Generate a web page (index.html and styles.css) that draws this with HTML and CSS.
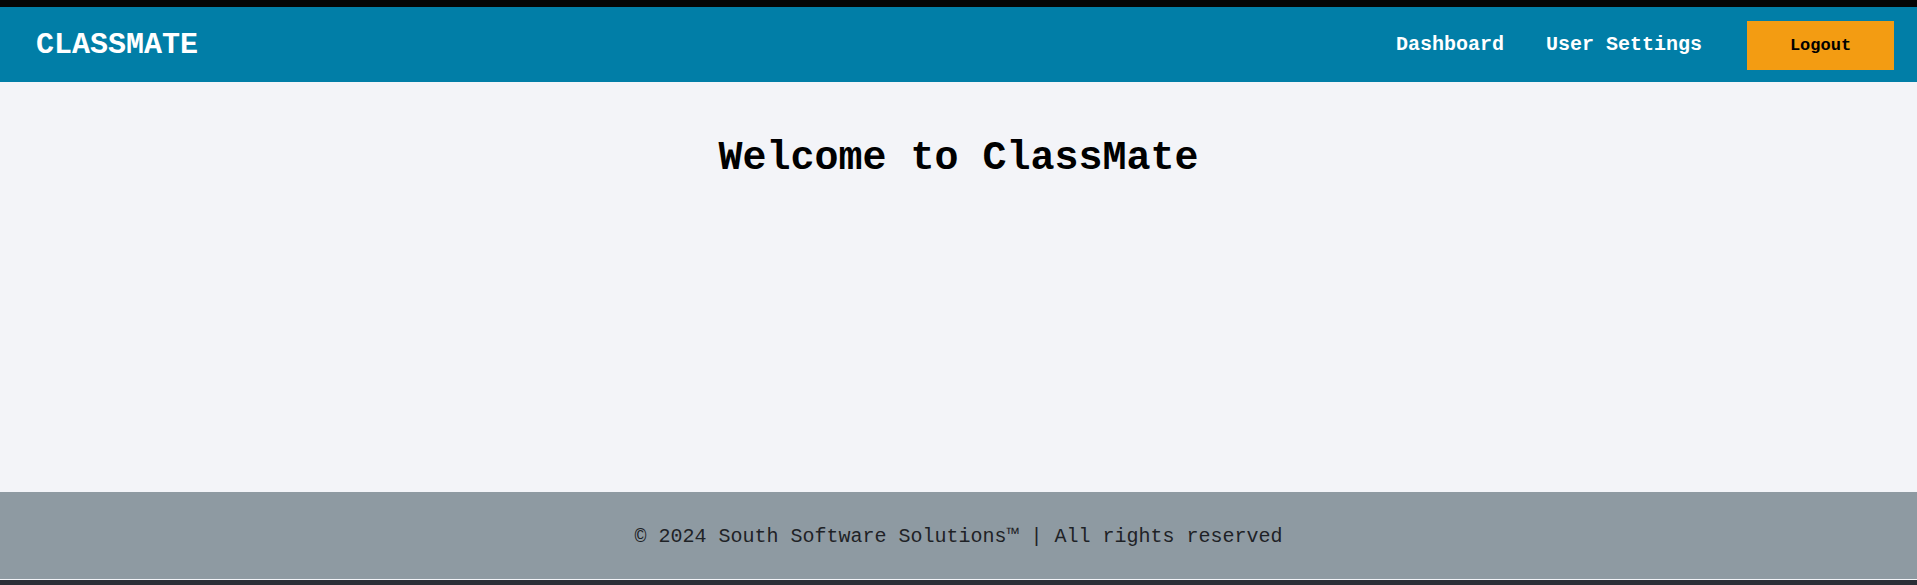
FILE: index.html
```html
<!DOCTYPE html>
<html lang="en">
<head>
<meta charset="utf-8">
<title>ClassMate</title>
<link rel="stylesheet" href="styles.css">
</head>
<body>
<div class="topstrip"></div>
<header class="header">
  <div class="logo">CLASSMATE</div>
  <nav class="nav">
    <a class="nav-link" href="#">Dashboard</a>
    <a class="nav-link" href="#">User Settings</a>
    <button class="logout" type="button">Logout</button>
  </nav>
</header>
<main class="main">
  <h1 class="title">Welcome to ClassMate</h1>
</main>
<footer class="footer">
  <p class="footer-text">© 2024 South Software Solutions™ | All rights reserved</p>
</footer>
<div class="bottomstrip"></div>
</body>
</html>
```
FILE: styles.css
```css
html, body {
  margin: 0;
  padding: 0;
}
body {
  min-height: 100vh;
  display: flex;
  flex-direction: column;
  background: #f3f4f8;
  font-family: "Liberation Mono", "Courier New", monospace;
}
.topstrip {
  height: 7px;
  background: #050505;
}
.header {
  height: 75px;
  background: #017ea7;
  display: flex;
  align-items: center;
  justify-content: space-between;
  padding: 0 23px 0 36px;
}
.logo {
  color: #ffffff;
  font-weight: bold;
  font-size: 30px;
}
.nav {
  display: flex;
  align-items: center;
}
.nav-link {
  color: #ffffff;
  font-weight: bold;
  font-size: 20px;
  text-decoration: none;
  margin-right: 42px;
}
.nav-link + .nav-link {
  margin-right: 45px;
}
.logout {
  width: 147px;
  height: 49px;
  margin-top: 2px;
  background: #f39c12;
  border: none;
  color: #000000;
  font-family: "Liberation Mono", "Courier New", monospace;
  font-weight: bold;
  font-size: 17px;
  padding: 0;
}
.main {
  flex: 1;
  padding: 25px 0 0;
}
.title {
  margin: 29px 0 0;
  text-align: center;
  font-size: 40px;
  font-weight: bold;
  color: #000000;
}
.footer {
  height: 87px;
  background: #8e9aa2;
  display: flex;
  align-items: center;
  justify-content: center;
}
.footer-text {
  margin: 2px 0 0;
  font-size: 20px;
  color: #1e2226;
}
.bottomstrip {
  height: 5px;
  margin-top: 1px;
  background: #2b2e36;
}
```
